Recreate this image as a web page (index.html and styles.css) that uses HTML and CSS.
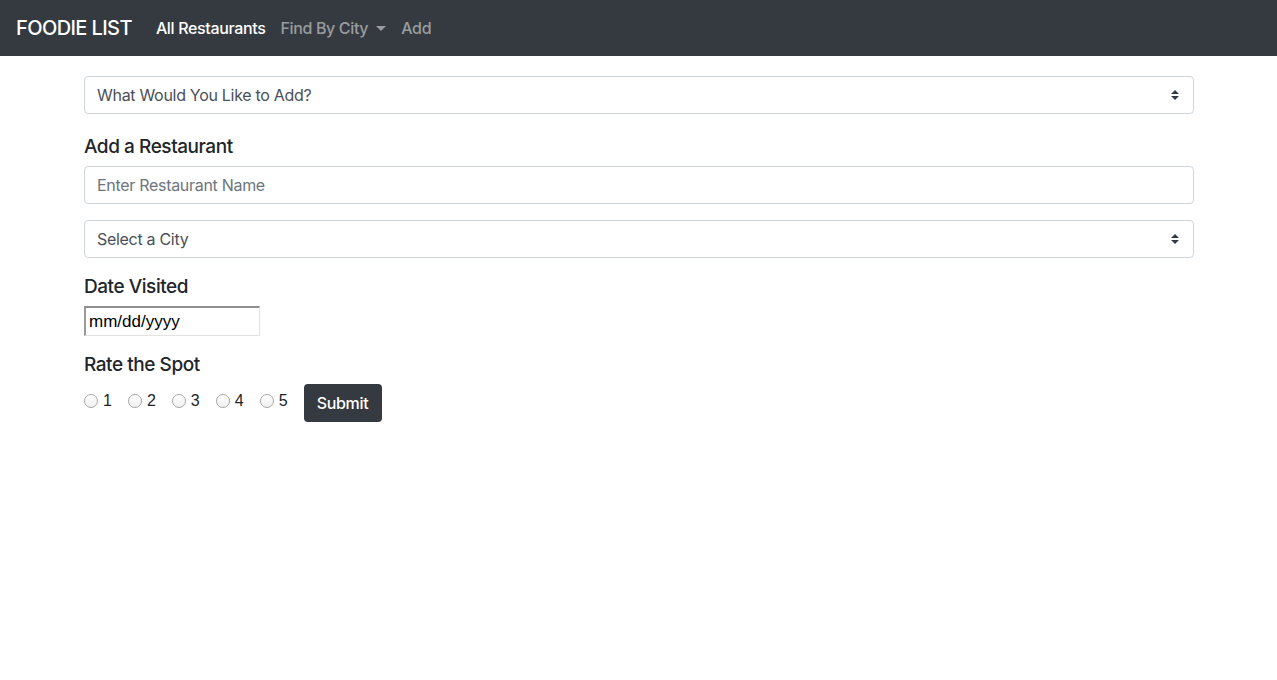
FILE: index.html
```html
<!DOCTYPE html>
<html>
<head>
<meta charset="utf-8">
<link rel="stylesheet" href="styles.css">
</head>
<body>
<nav class="navbar">
  <span class="brand">FOODIE LIST</span>
  <span class="nav-link active">All Restaurants</span>
  <span class="nav-link">Find By City <span class="caret"></span></span>
  <span class="nav-link">Add</span>
</nav>
<main class="container">
  <div class="select first">
    <span>What Would You Like to Add?</span>
    <svg class="arrows" width="8" height="10" viewBox="0 0 8 10"><path d="M4 0 L8 4 H0 Z M4 10 L0 6 H8 Z" fill="#343a40"/></svg>
  </div>
  <h5 class="label">Add a Restaurant</h5>
  <div class="input"><span class="placeholder">Enter Restaurant Name</span></div>
  <div class="select">
    <span>Select a City</span>
    <svg class="arrows" width="8" height="10" viewBox="0 0 8 10"><path d="M4 0 L8 4 H0 Z M4 10 L0 6 H8 Z" fill="#343a40"/></svg>
  </div>
  <h5 class="label">Date Visited</h5>
  <div class="date">mm/dd/yyyy</div>
  <h5 class="label">Rate the Spot</h5>
  <div class="rate-row">
    <label class="radio"><span class="circle"></span>1</label>
    <label class="radio"><span class="circle"></span>2</label>
    <label class="radio"><span class="circle"></span>3</label>
    <label class="radio"><span class="circle"></span>4</label>
    <label class="radio"><span class="circle"></span>5</label>
    <button class="btn">Submit</button>
  </div>
</main>
</body>
</html>
```
FILE: styles.css
```css
* { box-sizing: border-box; }
body {
  margin: 0;
  font-family: Inter, "Helvetica Neue", Arial, sans-serif;
  font-size: 16px;
  color: #212529;
  background: #fff;
}
.navbar {
  height: 56px;
  background: #343a40;
  display: flex;
  align-items: center;
  padding: 0 16px;
}
.brand {
  color: #fff;
  font-size: 20px;
  font-weight: 500;
  letter-spacing: -0.6px;
  margin-right: 24px;
}
.nav-link {
  color: rgba(255,255,255,.5);
  font-size: 16px;
  font-weight: 500;
  letter-spacing: -0.35px;
  margin-right: 15px;
  display: flex;
  align-items: center;
}
.nav-link.active { color: #fff; }
.caret {
  display: inline-block;
  margin-left: 8px;
  border-top: 5px solid rgba(255,255,255,.5);
  border-left: 5px solid transparent;
  border-right: 5px solid transparent;
  margin-top: 1px;
}
.container {
  width: 1110px;
  margin: 20px auto 0;
  position: relative;
  left: 0.5px;
}
.select, .input {
  height: 38px;
  border: 1px solid #ced4da;
  border-radius: 4px;
  display: flex;
  align-items: center;
  justify-content: space-between;
  padding: 0 14px 0 12px;
  color: #495057;
  font-size: 16px;
  letter-spacing: -0.3px;
  margin-bottom: 16px;
}
.select.first { margin-bottom: 20px; }
.placeholder { color: #6c757d; }
.label {
  margin: 0 0 7px;
  padding-top: 1px;
  font-size: 19px;
  font-weight: 500;
  line-height: 24px;
  letter-spacing: -0.45px;
}
.date {
  width: 176px;
  height: 30px;
  border-style: solid;
  border-width: 2px 1px 1px 2px;
  border-top-color: #8e8e8e;
  border-left-color: #9a9a9a;
  border-right-color: #e2e2e2;
  border-bottom-color: #e2e2e2;
  padding: 2px 3px 0;
  font-family: "Helvetica Neue", Arial, sans-serif;
  font-size: 17px;
  color: #000;
  line-height: 24px;
  margin-bottom: 16px;
}
.rate-row {
  display: flex;
  align-items: center;
}
.radio {
  display: flex;
  align-items: center;
  font-size: 16px;
  color: #212529;
  margin-right: 16px;
  margin-bottom: 4px;
  font-family: "Helvetica Neue", Arial, sans-serif;
}
.circle {
  width: 14px;
  height: 14px;
  border-radius: 50%;
  border: 1px solid #a8a8a8;
  background: linear-gradient(#fff, #f0f0f0);
  margin-right: 5px;
  margin-bottom: 1px;
}
.btn {
  height: 38px;
  width: 78px;
  background: #343a40;
  color: #fff;
  border: none;
  border-radius: 4px;
  font-family: Inter, "Helvetica Neue", Arial, sans-serif;
  font-size: 16px;
  font-weight: 500;
  letter-spacing: -0.3px;
}
```
